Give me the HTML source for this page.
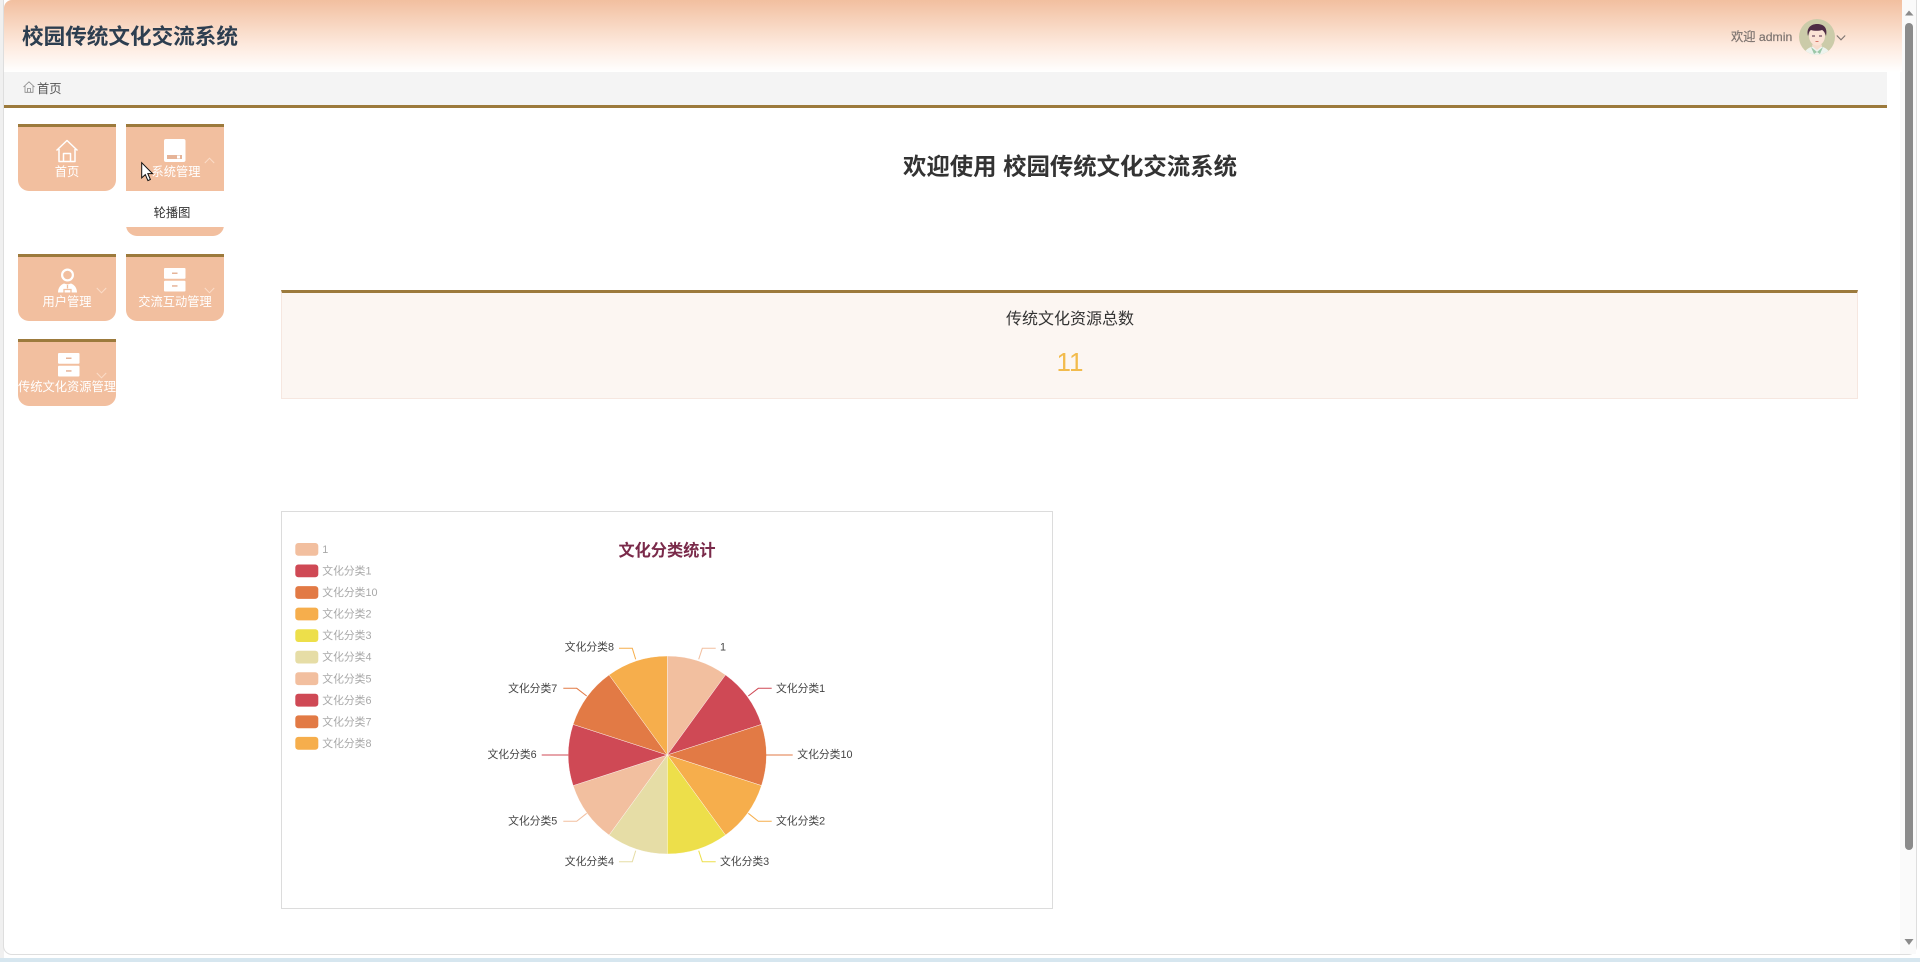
<!DOCTYPE html>
<html lang="zh">
<head>
<meta charset="utf-8">
<title>校园传统文化交流系统</title>
<style>
html,body{margin:0;padding:0;width:1920px;height:962px;overflow:hidden;background:#fff;font-family:"Liberation Sans","Noto Sans CJK SC",sans-serif;}
.abs,.a{position:absolute;}
.t{position:absolute;white-space:nowrap;line-height:1;}
.m{position:absolute;width:98px;background:#f2bf9f;border-top:3px solid #9c7a3c;box-sizing:border-box;height:67px;border-radius:0 0 11px 11px;}
.mt{position:absolute;white-space:nowrap;line-height:1;color:#fff;font-size:12.25px;transform:translate(-50%,-50%);}
svg{position:absolute;overflow:visible;}
</style>
</head>
<body>
<div class="a" style="left:0;top:958px;width:1920px;height:4px;background:#d6e6ef"></div>
<div class="a" style="left:0;top:0;width:4px;height:958px;background:#f0f0f0"></div>
<div class="a" style="left:3px;top:-10px;width:1914px;height:965px;background:#fff;border:1px solid #dedede;border-radius:9px;box-sizing:border-box"></div>
<div class="a" style="left:1900px;top:0;width:16px;height:954px;background:#fafafa"></div>

<!-- header -->
<div class="a" style="left:4px;top:0;width:1898px;height:72px;background:linear-gradient(180deg,#f2bf9f 0%,#fde9dd 62%,#fff 100%);border-radius:8px 0 0 0"></div>
<div class="t" style="left:22px;top:26px;font-size:21.6px;font-weight:bold;color:#2d3e50">校园传统文化交流系统</div>
<div class="t" style="left:1731px;top:30.500px;font-size:12.25px;color:#7d7470;-webkit-text-stroke:.2px #7d7470">欢迎 admin</div>
<svg style="left:1798px;top:19px" width="38" height="38" viewBox="0 0 38 38">
<defs><clipPath id="ac"><circle cx="19" cy="18" r="18"/></clipPath></defs>
<circle cx="19" cy="18" r="18" fill="#cbcba9"/>
<g clip-path="url(#ac)">
<path d="M5 38c1-8 8-11 14-11s13 3 14 11z" fill="#eef3ee"/>
<path d="M14 27l5 4 5-4-1-3h-8z" fill="#f7dccd"/>
<path d="M13 28l6 5-3 2zM25 28l-6 5 3 2z" fill="#9cc7a8"/>
<ellipse cx="19" cy="17" rx="8" ry="9.500" fill="#fbe3d6"/>
<path d="M10 17c-2-8 3-12 9-12s11 3 9 12c-1-3-2-5-4-6-3 1-8 1-11 0-2 1-2 3-3 6z" fill="#4d2a45"/>
<path d="M14 17h3M21 17h3" stroke="#4d2a45" stroke-width="1"/>
<path d="M17.500 22.500h3" stroke="#d8786a" stroke-width="1"/>
</g>
</svg>
<svg style="left:1836px;top:34px" width="10" height="8" viewBox="0 0 10 8"><path d="M.8 1.500L5 5.800 9.200 1.500" fill="none" stroke="#7d7470" stroke-width="1.100"/></svg>

<!-- breadcrumb -->
<div class="a" style="left:4px;top:72px;width:1883px;height:33px;background:#f4f4f4"></div>
<div class="a" style="left:4px;top:105px;width:1883px;height:3px;background:#9c7a3c"></div>
<svg style="left:23px;top:81px" width="12" height="12" viewBox="0 0 12 12"><path d="M.5 6L6 .8 11.500 6M2 5v6.300h8V5M4.500 11.300V7.500h3v3.800" fill="none" stroke="#888" stroke-width=".8"/></svg>
<div class="t" style="left:37px;top:82.500px;font-size:12.25px;color:#555">首页</div>

<!-- menu -->
<div class="m" style="left:18px;top:124px"></div>
<div class="m" style="left:126px;top:124px;border-radius:0"></div>
<div class="a" style="left:126px;top:191px;width:98px;height:45px;background:#f2bf9f;border-radius:0 0 11px 11px"></div>
<div class="a" style="left:126px;top:191px;width:98px;height:36px;background:#fff"></div>
<div class="m" style="left:18px;top:254px"></div>
<div class="m" style="left:126px;top:254px"></div>
<div class="m" style="left:18px;top:339px"></div>

<svg style="left:55px;top:139px" width="24" height="24" viewBox="0 0 24 24"><path d="M1.500 11.500L12 1.500l10.500 10M4 10v12.500h16V10M8.500 22.500v-8h7v8" fill="none" stroke="#fff" stroke-width="1.500" stroke-linejoin="round"/></svg>
<div class="mt" style="left:67px;top:172px">首页</div>

<svg style="left:164px;top:139px" width="22" height="24" viewBox="0 0 22 24"><rect width="21.500" height="23" rx="2" fill="#fff"/><rect x="3" y="16" width="15" height="4" fill="#e6b498"/><rect x="13" y="16.500" width="3" height="3" fill="#fff"/></svg>
<div class="mt" style="left:176px;top:172px">系统管理</div>
<svg style="left:204px;top:157px" width="11" height="7" viewBox="0 0 11 7"><path d="M.8 6L5.500 1.200 10.200 6" fill="none" stroke="#fbdcc8" stroke-width="1"/></svg>
<div class="t" style="left:172px;top:213px;font-size:12.25px;color:#333;transform:translateX(-50%) translateY(-50%)">轮播图</div>

<svg style="left:57px;top:268px" width="21" height="25" viewBox="0 0 21 25"><circle cx="10.500" cy="7" r="5.400" fill="none" stroke="#fff" stroke-width="2.200"/><path d="M1 24.500c0-5 3-8 6-9l3.500 1 3.500-1c3 1 6 4 6 9z" fill="#fff"/><path d="M10.500 17v3.500M7 24.500v-3h7v3" stroke="#f2bf9f" stroke-width="1.300" fill="none"/></svg>
<div class="mt" style="left:67px;top:302px">用户管理</div>
<svg style="left:96px;top:287px" width="11" height="7" viewBox="0 0 11 7"><path d="M.8 1L5.500 5.800 10.200 1" fill="none" stroke="#fbdcc8" stroke-width="1"/></svg>

<svg style="left:164px;top:268px" width="22" height="24" viewBox="0 0 22 24"><rect width="21.500" height="10.800" rx="1" fill="#fff"/><rect y="12.700" width="21.500" height="10.800" rx="1" fill="#fff"/><rect x="8" y="4.500" width="5.500" height="1.500" fill="#e6b498"/><rect x="8" y="17.200" width="5.500" height="1.500" fill="#e6b498"/></svg>
<div class="mt" style="left:175px;top:302px">交流互动管理</div>
<svg style="left:204px;top:287px" width="11" height="7" viewBox="0 0 11 7"><path d="M.8 1L5.500 5.800 10.200 1" fill="none" stroke="#fbdcc8" stroke-width="1"/></svg>

<svg style="left:58px;top:353px" width="22" height="24" viewBox="0 0 22 24"><rect width="21.500" height="10.800" rx="1" fill="#fff"/><rect y="12.700" width="21.500" height="10.800" rx="1" fill="#fff"/><rect x="8" y="4.500" width="5.500" height="1.500" fill="#e6b498"/><rect x="8" y="17.200" width="5.500" height="1.500" fill="#e6b498"/></svg>
<div class="mt" style="left:67px;top:387px">传统文化资源管理</div>
<svg style="left:96px;top:372px" width="11" height="7" viewBox="0 0 11 7"><path d="M.8 1L5.500 5.800 10.200 1" fill="none" stroke="#fbdcc8" stroke-width="1"/></svg>

<!-- cursor -->
<svg style="left:141px;top:162px" width="13" height="20" viewBox="0 0 13 20"><path d="M.7.700v15.200l3.600-3.300 2.600 6 2.500-1.100-2.600-5.900h4.700z" fill="#fff" stroke="#111" stroke-width="1"/></svg>

<!-- title -->
<div class="t" style="left:1070px;top:167px;font-size:23.400px;font-weight:bold;color:#333;transform:translate(-50%,-50%)">欢迎使用 校园传统文化交流系统</div>

<!-- stat -->
<div class="a" style="left:281px;top:290px;width:1577px;height:109px;box-sizing:border-box;background:#fcf6f2;border:1px solid #f6e7e0;border-top:3px solid #9c7a3c"></div>
<div class="t" style="left:1070px;top:320px;font-size:16px;color:#333;transform:translate(-50%,-50%)">传统文化资源总数</div>
<div class="t" style="left:1070px;top:362px;font-size:26px;color:#f2bb4c;transform:translate(-50%,-50%)">11</div>

<!-- chart -->
<div class="a" style="left:281px;top:511px;width:772px;height:398px;box-sizing:border-box;background:#fff;border:1px solid #dcdcdc"></div>
<div class="t" style="left:667px;top:551px;font-size:16.200px;font-weight:bold;color:#7a2a4a;transform:translate(-50%,-50%)">文化分类统计</div>

<svg style="left:0;top:0" width="1920" height="962" viewBox="0 0 1920 962" font-family="Liberation Sans, Noto Sans CJK SC, sans-serif" font-size="10.800">
<g>
<rect x="295.300" y="543" width="23" height="12.800" rx="3" fill="#f2bf9f"/>
<rect x="295.300" y="564.500" width="23" height="12.800" rx="3" fill="#cf4955"/>
<rect x="295.300" y="586.100" width="23" height="12.800" rx="3" fill="#e27a45"/>
<rect x="295.300" y="607.600" width="23" height="12.800" rx="3" fill="#f6ae4c"/>
<rect x="295.300" y="629.200" width="23" height="12.800" rx="3" fill="#eddf4a"/>
<rect x="295.300" y="650.700" width="23" height="12.800" rx="3" fill="#e6dda6"/>
<rect x="295.300" y="672.300" width="23" height="12.800" rx="3" fill="#f2bf9f"/>
<rect x="295.300" y="693.800" width="23" height="12.800" rx="3" fill="#cf4955"/>
<rect x="295.300" y="715.400" width="23" height="12.800" rx="3" fill="#e27a45"/>
<rect x="295.300" y="736.900" width="23" height="12.800" rx="3" fill="#f6ae4c"/>
</g>
<g fill="#a8a8a8">
<text x="322.300" y="553">1</text>
<text x="322.300" y="574.500">文化分类1</text>
<text x="322.300" y="596.100">文化分类10</text>
<text x="322.300" y="617.600">文化分类2</text>
<text x="322.300" y="639.200">文化分类3</text>
<text x="322.300" y="660.700">文化分类4</text>
<text x="322.300" y="682.300">文化分类5</text>
<text x="322.300" y="703.800">文化分类6</text>
<text x="322.300" y="725.400">文化分类7</text>
<text x="322.300" y="746.900">文化分类8</text>
</g>
<g stroke="#fff" stroke-width=".4">
<path d="M667.300 755L667.300 656A99 99 0 0 1 725.500 674.900Z" fill="#f2bf9f"/>
<path d="M667.300 755L725.500 674.900A99 99 0 0 1 761.500 724.400Z" fill="#cf4955"/>
<path d="M667.300 755L761.500 724.400A99 99 0 0 1 761.500 785.600Z" fill="#e27a45"/>
<path d="M667.300 755L761.500 785.600A99 99 0 0 1 725.500 835.100Z" fill="#f6ae4c"/>
<path d="M667.300 755L725.500 835.100A99 99 0 0 1 667.300 854Z" fill="#eddf4a"/>
<path d="M667.300 755L667.300 854A99 99 0 0 1 609.100 835.100Z" fill="#e6dda6"/>
<path d="M667.300 755L609.100 835.100A99 99 0 0 1 573.100 785.600Z" fill="#f2bf9f"/>
<path d="M667.300 755L573.100 785.600A99 99 0 0 1 573.100 724.400Z" fill="#cf4955"/>
<path d="M667.300 755L573.100 724.400A99 99 0 0 1 609.100 674.900Z" fill="#e27a45"/>
<path d="M667.300 755L609.100 674.900A99 99 0 0 1 667.300 656Z" fill="#f6ae4c"/>
</g>
<g fill="none" stroke-width="1">
<path d="M698.700 659.300L702.300 648.300H715.700" stroke="#f2bf9f"/>
<path d="M748.300 696L758.300 688.300H771.700" stroke="#cf4955"/>
<path d="M766 755H792.700" stroke="#e27a45"/>
<path d="M748.300 813.300L758.300 821.300H771.700" stroke="#f6ae4c"/>
<path d="M698.700 850.700L702.300 861.700H715.700" stroke="#eddf4a"/>
<path d="M635.700 850.700L632.300 861.700H619" stroke="#e6dda6"/>
<path d="M586.700 813.300L576.700 821.300H563.300" stroke="#f2bf9f"/>
<path d="M568.300 755H541.700" stroke="#cf4955"/>
<path d="M586.700 696L576.700 688.300H563.300" stroke="#e27a45"/>
<path d="M635.700 659.300L632.300 648.300H619" stroke="#f6ae4c"/>
</g>
<g fill="#444">
<text x="720" y="650.500">1</text>
<text x="776" y="692">文化分类1</text>
<text x="797.300" y="758">文化分类10</text>
<text x="776" y="824.500">文化分类2</text>
<text x="720" y="865">文化分类3</text>
<text x="614" y="865" text-anchor="end">文化分类4</text>
<text x="557.300" y="824.500" text-anchor="end">文化分类5</text>
<text x="536.700" y="758" text-anchor="end">文化分类6</text>
<text x="557.300" y="692" text-anchor="end">文化分类7</text>
<text x="614" y="650.500" text-anchor="end">文化分类8</text>
</g>
<!-- scrollbar -->
<rect x="1905" y="23" width="8" height="827" rx="4" fill="#8b8b8b"/>
<path d="M1905 15.500l4-5 4.500 5z" fill="#8b8b8b"/>
<path d="M1904.500 939h9l-4.500 6z" fill="#8b8b8b"/>
</svg>
</body>
</html>
